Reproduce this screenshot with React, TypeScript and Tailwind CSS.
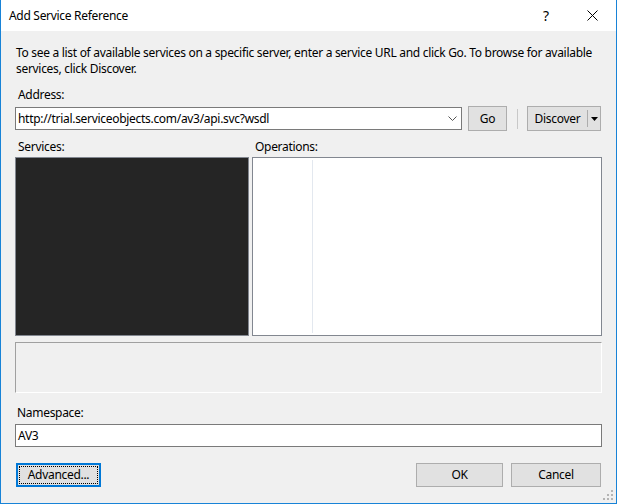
import React from "react";

function Grip() {
  const dots = [
    [8, 0],
    [4, 4],
    [8, 4],
    [0, 8],
    [4, 8],
    [8, 8],
  ];
  return (
    <svg width="11" height="11" className="absolute right-[2px] bottom-[2px]">
      {dots.map(([x, y], i) => (
        <rect key={i} x={x} y={y} width="2" height="2" fill="#b4b4b4" />
      ))}
    </svg>
  );
}

export default function App() {
  return (
    <div className="relative w-[617px] h-[504px] bg-[#f0f0f0] border-x border-b border-[#1883d7] flex flex-col text-[12px] leading-[16px] tracking-[-0.3px] text-black font-['Segoe_UI','Noto_Sans',sans-serif]">
      {/* Title bar */}
      <div className="h-[31px] bg-white flex items-center shrink-0">
        <div className="pl-[8px] flex-1">Add Service Reference</div>
        <div className="w-[46px] flex justify-center text-[14px]">?</div>
        <div className="w-[46px] h-[31px] flex items-center justify-center mr-[1px]">
          <svg width="11" height="11" viewBox="0 0 11 11">
            <path d="M0.5 0.5 L10.5 10.5 M10.5 0.5 L0.5 10.5" stroke="#000" strokeWidth="1" />
          </svg>
        </div>
      </div>

      {/* Content */}
      <div className="flex flex-col px-[14px]">
        <div className="mt-[14px] pl-[1px]">
          To see a list of available services on a specific server, enter a service URL and click Go. To browse for available services, click Discover.
        </div>

        <div className="mt-[10px] pl-[3px]">Address:</div>

        <div className="mt-[3px] flex items-center h-[25px]">
          <div className="w-[447px] h-[23px] bg-white border border-[#7a7a7a] flex items-center pl-[2px] pr-[4px]">
            <span className="flex-1">http://trial.serviceobjects.com/av3/api.svc?wsdl</span>
            <svg width="9" height="5" viewBox="0 0 9 5">
              <path d="M0.5 0.5 L4.5 4.5 L8.5 0.5" stroke="#555" fill="none" strokeWidth="1" />
            </svg>
          </div>
          <div className="ml-[6px] w-[39px] h-[25px] bg-[#e1e1e1] border border-[#adadad] flex items-center justify-center">
            Go
          </div>
          <div className="ml-[10px] w-[1px] h-[20px] bg-[#c8c8c8]" />
          <div className="ml-[9px] w-[74px] h-[25px] bg-[#e1e1e1] border border-[#adadad] flex items-center">
            <span className="flex-1 text-center">Discover</span>
            <div className="w-[1px] h-[17px] bg-[#adadad]" />
            <div className="w-[12px] flex items-center justify-center">
              <svg width="7" height="4" viewBox="0 0 7 4">
                <path d="M0 0 L7 0 L3.5 4 Z" fill="#000" />
              </svg>
            </div>
          </div>
        </div>

        <div className="mt-[8px] flex">
          <div className="w-[237px] pl-[3px]">Services:</div>
          <div className="pl-[3px]">Operations:</div>
        </div>

        <div className="mt-[2px] flex h-[179px] gap-[3px]">
          <div className="w-[234px] h-full bg-[#252525] border border-[#828790]" />
          <div className="flex-1 h-full bg-white border border-[#828790] flex py-[2px]">
            <div className="w-[60px] h-full border-r border-[#e3e8ef]" />
          </div>
        </div>

        <div className="mt-[6px] h-[51px] border-t border-l border-[#a0a0a0] border-b border-r border-b-white border-r-white" />

        <div className="mt-[12px] pl-[2px]">Namespace:</div>

        <div className="mt-[3px] h-[23px] bg-white border border-[#7a7a7a] flex items-center pl-[2px]">
          AV3
        </div>

        <div className="mt-[16px] flex items-center h-[24px]">
          <div className="ml-[1px] w-[85px] h-[24px] border-2 border-[#0078d7] bg-[#e1e1e1] p-[1px]">
            <div className="w-full h-full border border-dotted border-black flex items-center justify-center">
              Advanced...
            </div>
          </div>
          <div className="flex-1" />
          <div className="w-[87px] h-[24px] bg-[#e1e1e1] border border-[#adadad] flex items-center justify-center">
            OK
          </div>
          <div className="ml-[8px] w-[90px] h-[24px] bg-[#e1e1e1] border border-[#adadad] flex items-center justify-center mr-[1px]">
            Cancel
          </div>
        </div>
      </div>
      <Grip />
    </div>
  );
}
